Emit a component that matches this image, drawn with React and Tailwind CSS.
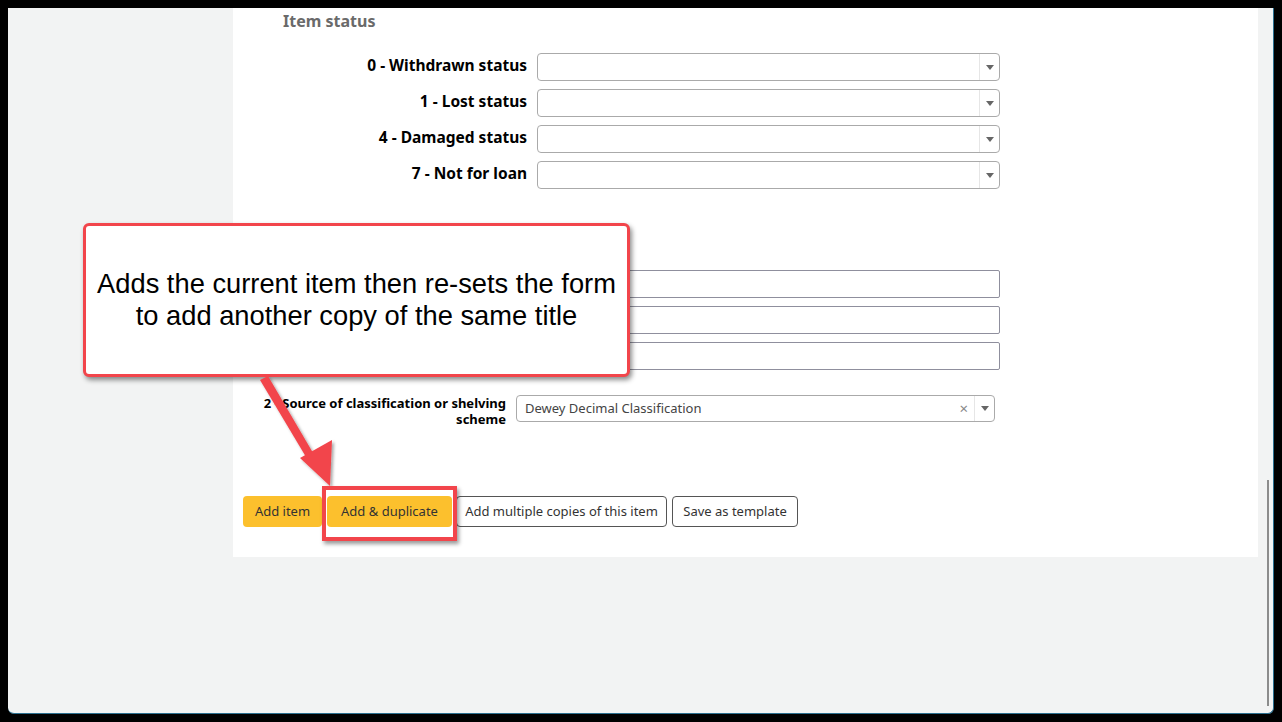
import React from 'react';

const statusRows = ['0 - Withdrawn status', '1 - Lost status', '4 - Damaged status', '7 - Not for loan'];
const textRows = ['call', 'barcode', 'copy'];

const Caret = () => (
  <svg width="8" height="5" viewBox="0 0 8 5"><path d="M0 0h8L4 5z" fill="#666" /></svg>
);

const SelectBox = ({ width, children, clear }) => (
  <div className={`flex h-[28px] ${width} items-center rounded-[4px] border border-[#aaa] bg-white`}>
    <div className="flex-1 truncate pl-[8px] text-[13px] text-[#444]">{children}</div>
    {clear && <span className="mr-[6px] text-[15px] leading-none text-[#888]">×</span>}
    <div className="flex h-full w-[20px] items-center justify-center border-l border-[#e6e6e6]">
      <Caret />
    </div>
  </div>
);

export default function App() {
  return (
    <div className="relative h-[722px] w-[1282px] overflow-hidden bg-black p-2" style={{ fontFamily: '"Noto Sans", "Open Sans", sans-serif' }}>
      <div className="relative flex h-[706px] w-[1266px] rounded-b-[6px] border-b border-r border-[#2b6f8f] bg-[#f2f3f3]">
        <div className="w-[225px] shrink-0" />
        <div className="h-[549px] w-[1025px] bg-white">
          <h3 className="pl-[50px] pt-[2px] text-[16px] font-bold leading-[23px] text-[#6a6a6a]">Item status</h3>

          <div className="mt-[20px] flex flex-col gap-[8px]">
            {statusRows.map((label) => (
              <div key={label} className="flex items-start gap-[10px]">
                <div className="w-[294px] pt-[2px] text-right text-[15.5px] font-bold leading-[20px] text-black">{label}</div>
                <SelectBox width="w-[463px]" />
              </div>
            ))}
          </div>

          {/* section under the callout: its heading and labels are covered */}
          <div className="mt-[81px] flex flex-col gap-[8px]">
            {textRows.map((key) => (
              <div key={key} className="flex items-start gap-[10px]">
                <div className="w-[294px]" />
                <div className="h-[28px] w-[463px] rounded-[2px] border border-[#8f8f9d] bg-white" />
              </div>
            ))}
          </div>

          <div className="mt-[25px] flex items-start gap-[10px]">
            <div className="w-[273px] text-right text-[13px] font-bold leading-[16px] text-black">
              2 - Source of classification or shelving<br />scheme
            </div>
            <SelectBox width="w-[479px] !h-[27px]" clear>Dewey Decimal Classification</SelectBox>
          </div>

          <div className="mt-[69px] flex items-center pl-[10px] text-[13px] leading-none text-[#333]">
            <button className="h-[31px] w-[79px] rounded-[4px] bg-[#fcc02d]">Add item</button>
            <button className="ml-[5px] h-[31px] w-[125px] rounded-[4px] bg-[#fcc02d]">Add &amp; duplicate</button>
            <button className="ml-[4px] h-[31px] w-[211px] rounded-[4px] border border-[#555] bg-white">Add multiple copies of this item</button>
            <button className="ml-[5px] h-[31px] w-[126px] rounded-[4px] border border-[#555] bg-white">Save as template</button>
          </div>
        </div>
        <div className="absolute left-[1259px] top-[472px] h-[226px] w-[2px] bg-[#8c8c8c]" />
      </div>

      {/* annotation: callout */}
      <div className="absolute left-[83px] top-[223px] flex h-[154px] w-[547px] items-center justify-center rounded-[6px] border-[3px] border-[#f2454b] bg-white shadow-[2px_3px_5px_rgba(0,0,0,0.45)]">
        <p className="text-center text-[27.3px] leading-[32px] text-black" style={{ fontFamily: '"Liberation Sans", Arial, sans-serif' }}>
          Adds the current item then re-sets the form<br />to add another copy of the same title
        </p>
      </div>

      {/* annotation: arrow */}
      <svg className="absolute left-0 top-0" width="1282" height="722" viewBox="0 0 1282 722">
        <defs>
          <filter id="sh" x="-20%" y="-20%" width="140%" height="140%">
            <feDropShadow dx="2" dy="2" stdDeviation="1.5" floodColor="#000" floodOpacity="0.35" />
          </filter>
        </defs>
        <g filter="url(#sh)" fill="#f2454b">
          <path d="M260 380 L268 376 L316 458 L309 462 Z" />
          <path d="M300 458 L332 440 L330 486 Z" />
        </g>
      </svg>

      {/* annotation: highlight box */}
      <div className="absolute left-[322px] top-[486px] h-[55px] w-[135px] border-[4px] border-[#f2454b] shadow-[2px_3px_4px_rgba(0,0,0,0.4)]" />
    </div>
  );
}
